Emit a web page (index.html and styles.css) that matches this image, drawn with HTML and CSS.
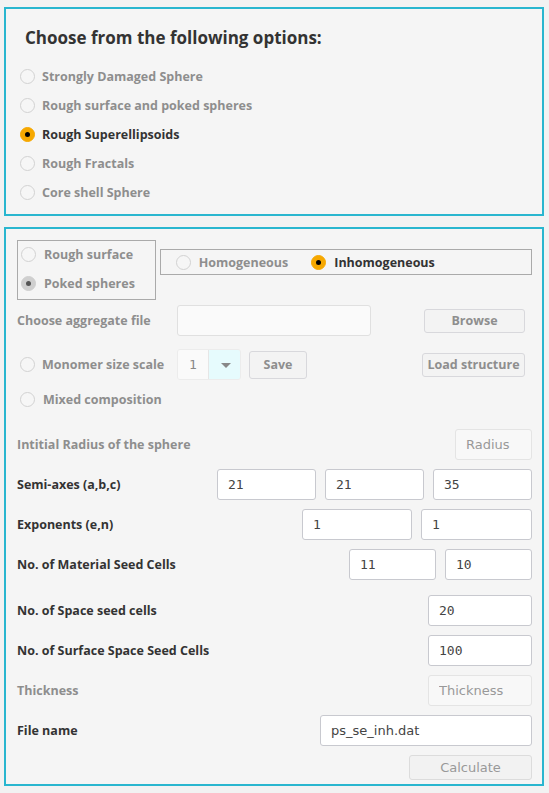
FILE: index.html
```html
<!DOCTYPE html>
<html lang="en">
<head>
    <meta charset="UTF-8">
    <meta name="viewport" content="width=device-width, initial-scale=1.0">
    <title>Rough particle generator</title>
    <link rel="stylesheet" href="styles.css">
</head>
<body>
<section class="panel options">
    <h2 class="title">Choose from the following options:</h2>
    <ul class="choices">
        <li><span class="radio"></span><span class="label muted">Strongly Damaged Sphere</span></li>
        <li><span class="radio"></span><span class="label muted">Rough surface and poked spheres</span></li>
        <li><span class="radio checked"></span><span class="label">Rough Superellipsoids</span></li>
        <li><span class="radio"></span><span class="label muted">Rough Fractals</span></li>
        <li><span class="radio"></span><span class="label muted">Core shell Sphere</span></li>
    </ul>
</section>

<section class="panel form">
    <div class="row top">
        <div class="group kind">
            <div class="opt"><span class="radio"></span><span class="label muted">Rough surface</span></div>
            <div class="opt"><span class="radio grey"></span><span class="label muted">Poked spheres</span></div>
        </div>
        <div class="group medium">
            <div class="opt"><span class="radio"></span><span class="label muted">Homogeneous</span></div>
            <div class="opt"><span class="radio checked"></span><span class="label">Inhomogeneous</span></div>
        </div>
    </div>

    <div class="row file">
        <div class="lead">
            <span class="label muted">Choose aggregate file</span>
        </div>
        <input class="field blank wide" type="text">
        <button class="btn browse">Browse</button>
    </div>

    <div class="row monomer">
        <div class="lead">
            <span class="radio"></span>
            <span class="label muted">Monomer size scale</span>
        </div>
        <div class="combo">
            <span class="combo-value">1</span>
            <span class="combo-arrow"></span>
        </div>
        <button class="btn save">Save</button>
        <button class="btn load">Load structure</button>
    </div>

    <div class="row mixed">
        <span class="radio"></span>
        <span class="label muted">Mixed composition</span>
    </div>

    <div class="params">
        <div class="param">
            <span class="label muted">Intitial Radius of the sphere</span>
            <input class="field off" style="width: 77px" placeholder="Radius" disabled>
        </div>
        <div class="param">
            <span class="label">Semi-axes (a,b,c)</span>
            <div class="inputs">
                <input class="field num" style="width: 99px" value="21">
                <input class="field num" style="width: 99px" value="21">
                <input class="field num" style="width: 99px" value="35">
            </div>
        </div>
        <div class="param">
            <span class="label">Exponents (e,n)</span>
            <div class="inputs">
                <input class="field num" style="width: 110px" value="1">
                <input class="field num" style="width: 111px" value="1">
            </div>
        </div>
        <div class="param">
            <span class="label">No. of Material Seed Cells</span>
            <div class="inputs">
                <input class="field num" style="width: 87px" value="11">
                <input class="field num" style="width: 87px" value="10">
            </div>
        </div>
        <div class="param spaced">
            <span class="label">No. of Space seed cells</span>
            <input class="field num" style="width: 104px" value="20">
        </div>
        <div class="param">
            <span class="label">No. of Surface Space Seed Cells</span>
            <input class="field num" style="width: 104px" value="100">
        </div>
        <div class="param">
            <span class="label muted">Thickness</span>
            <input class="field off" style="width: 104px" placeholder="Thickness" disabled>
        </div>
        <div class="param">
            <span class="label">File name</span>
            <input class="field text" style="width: 212px" value="ps_se_inh.dat">
        </div>
        <div class="actions">
            <button class="btn calc" disabled>Calculate</button>
        </div>
    </div>
</section>
</body>
</html>
```

FILE: styles.css
```css
body {
    margin: 0;
    padding: 7px 5px 0 4px;
    background: #f2f2f2;
    font-family: "Open Sans", "DejaVu Sans", sans-serif;
    color: #333;
}

.panel {
    border: 2px solid #29b6cf;
    background: #f5f5f5;
    box-sizing: border-box;
    width: 540px;
}

/* top box with the particle types */
.options {
    height: 209px;
    padding: 17px 0 0 14px;
}

.title {
    margin: 0 0 0 5px;
    font-size: 17px;
    font-weight: bold;
    color: #333;
    line-height: 24px;
}

.choices {
    list-style: none;
    margin: 12px 0 0 0;
    padding: 0;
}

.choices li {
    display: flex;
    align-items: center;
    height: 29px;
}

.choices .label {
    margin-left: 7px;
}

.label {
    font-size: 12.5px;
    font-weight: bold;
    color: #333;
    white-space: nowrap;
}

.label.muted {
    color: #8e8e8e;
}

.radio {
    width: 13px;
    height: 13px;
    border: 1px solid #d2d2d2;
    border-radius: 50%;
    background: #f6f6f6;
    flex: none;
    position: relative;
}

.radio.checked {
    background: #f6a800;
    border-color: #f6a800;
}

.radio.grey {
    background: #cfcfcf;
    border-color: #cfcfcf;
}

.radio.checked::after,
.radio.grey::after {
    content: "";
    position: absolute;
    left: 4px;
    top: 4px;
    width: 5px;
    height: 5px;
    border-radius: 50%;
    background: #000;
}

.radio.grey::after {
    background: #555;
}

/* lower box with the generator settings */
.form {
    margin-top: 11px;
    height: 559px;
    padding: 11px 10px 0 11px;
}

.row {
    display: flex;
    align-items: center;
}

.row.top {
    align-items: flex-start;
}

.group {
    border: 1px solid #aaa;
    box-sizing: border-box;
}

.kind {
    width: 139px;
    height: 60px;
    padding: 0 0 0 3px;
    display: flex;
    flex-direction: column;
    gap: 3px;
}

.kind .opt {
    height: 26px;
    display: flex;
    align-items: center;
}

.opt .label {
    margin-left: 8px;
}

.medium {
    margin: 9px 0 0 4px;
    width: 373px;
    height: 26px;
    display: flex;
    align-items: center;
    padding-left: 15px;
}

.medium .opt {
    display: flex;
    align-items: center;
    margin-right: 23px;
}

.lead {
    width: 160px;
    flex: none;
    display: flex;
    align-items: center;
}

.row.file {
    margin-top: 5px;
    height: 31px;
}

.field {
    box-sizing: border-box;
    height: 31px;
    border: 1px solid #c8c9cf;
    border-radius: 3px;
    background: #fff;
    padding: 0 10px;
    font-family: "DejaVu Sans", sans-serif;
    font-size: 13px;
    color: #444;
    outline: none;
}

.field.num {
    font-family: "DejaVu Sans Mono", monospace;
}

.field.blank {
    background: #fafafa;
    border-color: #e0e0e0;
}

.field.off {
    background: #f8f8f8;
    border-color: #e4e4e4;
}

.field.off::placeholder {
    color: #999;
}

.wide {
    width: 194px;
}

.btn {
    box-sizing: border-box;
    font-family: "Open Sans", "DejaVu Sans", sans-serif;
    font-size: 12.5px;
    font-weight: bold;
    color: #8e8e8e;
    background: #f3f3f3;
    border: 1px solid #d8d8dc;
    border-radius: 3px;
    padding: 0;
}

.browse {
    margin-left: auto;
    margin-right: 7px;
    width: 101px;
    height: 24px;
}

.row.monomer {
    margin-top: 13px;
    height: 31px;
}

.monomer .radio {
    margin-left: 3px;
}

.monomer .label {
    margin-left: 7px;
}

.combo {
    display: flex;
    height: 31px;
    width: 64px;
    border: 1px solid #ececec;
    border-radius: 3px;
    box-sizing: border-box;
    overflow: hidden;
}

.combo-value {
    width: 30px;
    background: #fafafa;
    border-right: 1px solid #e6e6e6;
    display: flex;
    align-items: center;
    justify-content: center;
    font-family: "DejaVu Sans Mono", monospace;
    font-size: 13px;
    color: #888;
}

.combo-arrow {
    flex: 1;
    background: #e6fbfd;
    position: relative;
}

.combo-arrow::after {
    content: "";
    position: absolute;
    left: 12px;
    top: 13px;
    border-left: 5px solid transparent;
    border-right: 5px solid transparent;
    border-top: 5px solid #888;
}

.save {
    margin-left: 8px;
    width: 58px;
    height: 28px;
}

.load {
    margin-left: auto;
    margin-right: 7px;
    width: 103px;
    height: 24px;
}

.row.mixed {
    margin-top: 9px;
    height: 20px;
    padding-left: 3px;
}

.mixed .label {
    margin-left: 8px;
}

.params {
    margin-top: 20px;
}

.param {
    display: flex;
    align-items: center;
    justify-content: space-between;
    height: 31px;
    margin-bottom: 9px;
}

.param.spaced {
    margin-top: 15px;
}

.inputs {
    display: flex;
    gap: 9px;
}

.actions {
    display: flex;
    justify-content: flex-end;
}

.calc {
    width: 123px;
    height: 25px;
    font-family: "DejaVu Sans", sans-serif;
    font-weight: normal;
    font-size: 13px;
    color: #999;
    background: #f2f2f2;
    border-color: #dcdcdc;
}
```
